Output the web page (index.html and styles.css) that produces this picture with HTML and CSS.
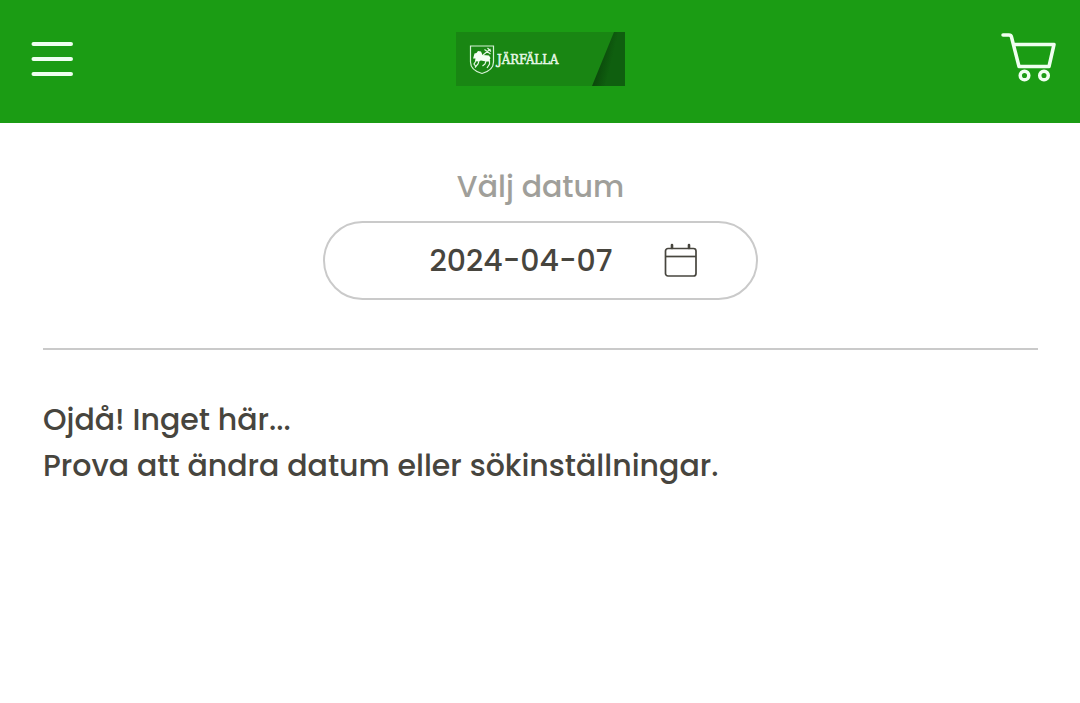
FILE: index.html
```html
<!DOCTYPE html>
<html lang="sv">
<head>
<meta charset="utf-8">
<meta name="viewport" content="width=device-width, initial-scale=1">
<title>Järfälla</title>
<link rel="stylesheet" href="styles.css">
</head>
<body>
<header class="topbar">
  <button class="icon-button" type="button" aria-label="Meny">
    <svg width="56" height="36" viewBox="0 0 56 36" fill="none" stroke="currentColor" stroke-width="4" stroke-linecap="round"><path d="M9.500 3H47M9.500 18H47M9.500 33H47"/></svg>
  </button>
  <a class="logo" href="#" aria-label="Järfälla">
    <svg width="169" height="54" viewBox="0 0 169 54">
      <defs>
        <linearGradient id="fold" x1="0" y1="0" x2="1" y2="0.4">
          <stop offset="0.3" stop-color="#0a450a"/>
          <stop offset="0.7" stop-color="#0f5f0f"/>
        </linearGradient>
      </defs>
      <path fill="#198613" d="M0 0H169V54H0Z"/>
      <path fill="url(#fold)" d="M158 0H169V54H136Z"/>
      <path fill="none" stroke="#d5f2d5" stroke-width="1.2" d="M14.500 14H37.500V30C37.500 36 33 39.500 26 41.500C19 39.500 14.500 36 14.500 30Z"/>
      <path fill="#f4fff4" d="M17.500 25L18.500 21.500L20.500 21L22 19L25 19.500L26.500 23L33 23.500L34.500 26L33 29.500L30 29.500L25 28.500L22 29.500L19 29L19.500 26.500L17 26.500Z"/>
      <path fill="none" stroke="#e4f8e4" stroke-width="1.200" d="M20 29L18 32L19.500 34M23 29L22 32L19 35.500M30 29L29 32L26.500 34M33.500 28L33.500 32L31 36M27 23L34.500 17M28.500 17.500L34.500 22M31.500 16L35 19.500"/>
      <text class="logo-text" x="41" y="32">JÄRFÄLLA</text>
    </svg>
  </a>
  <button class="icon-button" type="button" aria-label="Varukorg">
    <svg width="56" height="54" viewBox="0 0 56 54" fill="none" stroke="currentColor" stroke-width="3.500" stroke-linecap="round" stroke-linejoin="round"><path d="M3 3H9Q11 3 11.500 5L19 34.500H49L54 12.500H13.500"/><circle cx="24.500" cy="43.500" r="4.300"/><circle cx="44" cy="43.500" r="4.300"/></svg>
  </button>
</header>
<main class="content">
  <form class="date-form">
    <label class="date-label" for="date">Välj datum</label>
    <div class="date-field">
      <input class="date-input" id="date" type="text" value="2024-04-07">
      <button class="date-button" type="button" aria-label="Öppna kalender">
        <svg width="34" height="36" viewBox="0 0 34 36" fill="none" stroke="currentColor" stroke-width="1.700"><rect x="1.500" y="5.500" width="30.500" height="27.500" rx="2.500"/><path d="M1.500 13.500H32"/><path stroke-width="2.600" stroke-linecap="round" d="M8 2V5M25 2V5"/></svg>
      </button>
    </div>
  </form>
  <p class="message">Ojdå! Inget här...<br>Prova att ändra datum eller sökinställningar.</p>
</main>
</body>
</html>
```
FILE: styles.css
```css
* {
  box-sizing: border-box;
}

body {
  margin: 0;
  background: #fff;
  color: #47453e;
  font-family: Poppins, Inter, sans-serif;
  font-size: 30px;
  font-weight: 500;
  line-height: 46px;
}

button {
  display: flex;
  padding: 0;
  border: 0;
  background: none;
  color: inherit;
  cursor: pointer;
}

svg {
  display: block;
}

.topbar {
  display: grid;
  grid-template-columns: 1fr auto 1fr;
  align-items: center;
  padding: 32px 24px 37px 24px;
  background: #1b9c14;
}

.icon-button {
  color: #effff0;
}

.icon-button:last-child {
  justify-self: end;
}

.logo-text {
  fill: #e6f8e6;
  stroke: #e6f8e6;
  stroke-width: 0.5px;
  font-family: "DejaVu Serif Condensed", "DejaVu Serif", serif;
  font-size: 13px;
  font-weight: 400;
}

.content {
  padding: 41px 42px 0 43px;
}

.date-form {
  display: flex;
  flex-direction: column;
  align-items: center;
  gap: 11px;
  padding-bottom: 48px;
  border-bottom: 2px solid #cacaca;
}

.date-label {
  color: #a09f9a;
}

.date-field {
  display: flex;
  width: 100%;
  max-width: 435px;
  height: 79px;
  padding: 0 43px 0 68px;
  border: 2px solid #cacaca;
  border-radius: 40px;
}

.date-input {
  flex: 1;
  min-width: 0;
  padding: 0;
  border: 0;
  background: none;
  color: inherit;
  font: inherit;
  text-align: center;
}

.date-button {
  align-items: center;
  justify-content: center;
  width: 64px;
}

.message {
  margin: 47px 0 0;
}
```
